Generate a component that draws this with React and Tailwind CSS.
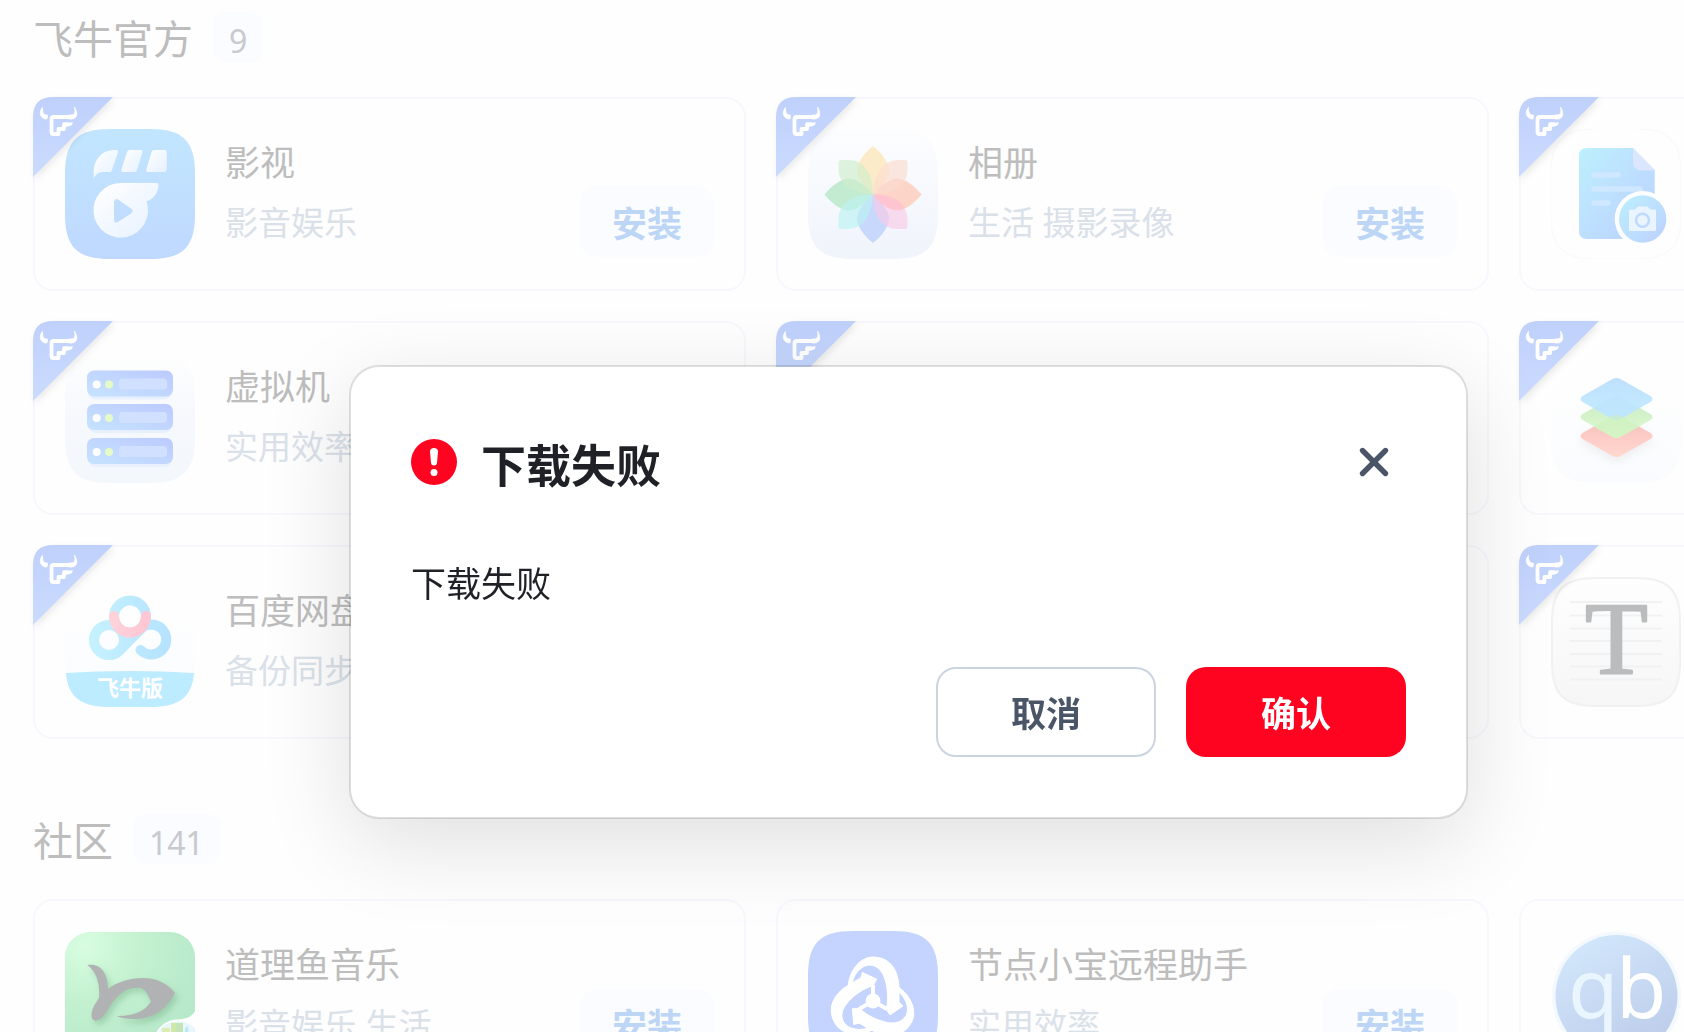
import React, { useState } from 'react';
import { X } from 'lucide-react';

const TILE = 'M0 45C0 12 12 0 45 0H85C118 0 130 12 130 45V85C130 118 118 130 85 130H45C12 130 0 118 0 85Z';

// --- App icons ---

const VideoIcon = () => (
  <svg viewBox="0 0 130 130" className="size-full">
    <defs>
      <linearGradient id="video-bg" x1="0" y1="0" x2="0" y2="1">
        <stop offset="0" stopColor="#c2e6ff" />
        <stop offset="1" stopColor="#bfd8ff" />
      </linearGradient>
      <linearGradient id="video-fg" x1="0" y1="0" x2="1" y2="1">
        <stop offset="0" stopColor="#ffffff" />
        <stop offset="1" stopColor="#e6f1ff" />
      </linearGradient>
    </defs>
    <path d={TILE} fill="url(#video-bg)" />
    <path d="M28.7 49.3V43C29 30 37 21 50 21H51.5Q53.5 21 53 23L47 41Q46.4 43 44.500 43H38C34 43 31 45 28.700 49.300Z" fill="url(#video-fg)" />
    <path d="M65 21H76Q78 21 77.500 23L72 41Q71.300 43 69.500 43H57.500Q55.700 43 56.300 41L62 23Q62.800 21 65 21Z" fill="url(#video-fg)" />
    <path d="M89 21H99.500Q101.700 21 101.700 23V41Q101.700 43 99.500 43H82.500Q80.600 43 81.200 41L86.500 23Q87.200 21 89 21Z" fill="url(#video-fg)" />
    <path
      fillRule="evenodd"
      d="M56 54H92Q93.700 54 93.500 56C93 64 89 70 81.500 72.300A27.300 27.300 0 1 1 56 54ZM49 73V91Q49.500 95 53 93L66 84.500Q69.500 82 66 79.500L53 70.500Q49.500 69 49 73Z"
      fill="url(#video-fg)"
    />
  </svg>
);

const PETAL = 'M65 65.500C54 56 49 48 49 41S56 24 65 17C74 24 81 34 81 41S76 56 65 65.500Z';
const LEAF = 'M65 65.500C42 64 30.500 54 30.500 40V33Q30.500 31 33 31H40C56 31 65 44 65 65.500Z';

const PhotosIcon = () => (
  <svg viewBox="0 0 130 130" className="size-full">
    <defs>
      <linearGradient id="photos-bg" x1="0" y1="0" x2="0" y2="1">
        <stop offset="0" stopColor="#fcfdff" />
        <stop offset="1" stopColor="#f0f4fb" />
      </linearGradient>
    </defs>
    <path d={TILE} fill="url(#photos-bg)" />
    <g opacity="0.95">
      <path d={PETAL} fill="#fdebc6" />
      <path d={PETAL} fill="#fdd3c6" transform="rotate(90 65 65.500)" />
      <path d={PETAL} fill="#c6d7fd" transform="rotate(180 65 65.500)" />
      <path d={PETAL} fill="#c0ebd0" transform="rotate(270 65 65.500)" />
    </g>
    <g opacity="0.65">
      <path d={LEAF} fill="#d0efcc" />
      <path d={LEAF} fill="#fddcd0" transform="rotate(90 65 65.500)" />
      <path d={LEAF} fill="#f9cbe6" transform="rotate(180 65 65.500)" />
      <path d={LEAF} fill="#bdf3f3" transform="rotate(270 65 65.500)" />
    </g>
    <path d="M65 65.500C80 65 92 70 97 79C86 84 74 78 65 65.500Z" fill="#ffc2cd" opacity="0.7" />
  </svg>
);

const DocumentIcon = () => (
  <svg viewBox="0 0 130 130" className="size-full">
    <defs>
      <linearGradient id="doc-fg" x1="0" y1="0" x2="1" y2="1">
        <stop offset="0" stopColor="#bdf0fd" />
        <stop offset="0.6" stopColor="#bddcff" />
        <stop offset="1" stopColor="#bdd0ff" />
      </linearGradient>
    </defs>
    <path d={TILE} fill="#fefefe" stroke="#f8f9fd" strokeWidth="1" />
    <path d="M36 19H82L103.700 41V102Q103.700 110 95.700 110H36Q28 110 28 102V27Q28 19 36 19Z" fill="url(#doc-fg)" />
    <path d="M82 19L103.700 41.500H91Q82 41.500 82 33Z" fill="#dce6ff" />
    <path d="M43 46H67M43 60H89M43 74H57" stroke="#d0e8ff" strokeWidth="5.500" strokeLinecap="round" />
    <circle cx="91.700" cy="90" r="28" fill="#fefefe" />
    <circle cx="91.700" cy="90" r="23.700" fill="url(#doc-fg)" />
    <path d="M79 80.500H84L87 77.500H96.500L99.500 80.500H104Q105 80.500 105 81.500V101Q105 102 104 102H79Q78 102 78 101V81.500Q78 80.500 79 80.500Z" fill="#eaf4ff" />
    <circle cx="91.500" cy="91.300" r="6.500" fill="none" stroke="#bddaff" strokeWidth="2.500" />
  </svg>
);

const ServerIcon = () => (
  <svg viewBox="0 0 130 130" className="size-full">
    <defs>
      <linearGradient id="server-bg" x1="0" y1="0" x2="0" y2="1">
        <stop offset="0" stopColor="#fefefe" />
        <stop offset="0.5" stopColor="#f6f8fd" />
        <stop offset="1" stopColor="#f3f8fd" />
      </linearGradient>
      <linearGradient id="server-fg" x1="0" y1="1" x2="1" y2="0">
        <stop offset="0" stopColor="#c6e3ff" />
        <stop offset="1" stopColor="#bccaff" />
      </linearGradient>
    </defs>
    <path d={TILE} fill="url(#server-bg)" />
    {[17.5, 51, 85].map((y) => (
      <g key={y}>
        <rect x="23" y={y + 6} width="84" height="23" rx="8" fill="#e8f0fd" />
        <rect x="22" y={y} width="86" height="26" rx="7" fill="url(#server-fg)" />
        <circle cx="31.700" cy={y + 14} r="4" fill="#ffffff" />
        <circle cx="44" cy={y + 14} r="4" fill="#e6fac8" />
        <rect x="54" y={y + 8} width="48" height="11" rx="4" fill="#d2e0ff" />
      </g>
    ))}
  </svg>
);

const LayersIcon = () => (
  <svg viewBox="0 0 130 130" className="size-full">
    <defs>
      <linearGradient id="layers-bg" x1="0" y1="0" x2="0" y2="1">
        <stop offset="0.3" stopColor="#fefefe" />
        <stop offset="1" stopColor="#f9fbfe" />
      </linearGradient>
      <linearGradient id="layer-blue" x1="0" y1="0" x2="0" y2="1">
        <stop offset="0" stopColor="#bfe0fd" />
        <stop offset="1" stopColor="#c4edff" />
      </linearGradient>
      <linearGradient id="layer-green" x1="0" y1="0" x2="0" y2="1">
        <stop offset="0" stopColor="#c6ebc6" />
        <stop offset="1" stopColor="#e2fad0" />
      </linearGradient>
      <linearGradient id="layer-red" x1="0" y1="0" x2="0" y2="1">
        <stop offset="0" stopColor="#eebfb8" />
        <stop offset="0.5" stopColor="#fdcbc6" />
        <stop offset="1" stopColor="#ffd8ce" />
      </linearGradient>
    </defs>
    <path d={TILE} fill="url(#layers-bg)" />
    <g transform="translate(1.500 0)">
      <g className="drop-shadow-[0_4px_5px_rgba(0,0,0,0.06)]">
        <path d="M60 63Q64 61 68 63L98 80Q102 83 98 86L68 103Q64 105 60 103L30 86Q26 83 30 80Z" fill="url(#layer-red)" />
      </g>
      <path d="M60 44Q64 42 68 44L98 61Q102 64 98 67L68 84Q64 86 60 84L30 67Q26 64 30 61Z" fill="url(#layer-green)" />
      <path d="M60 26Q64 24 68 26L98 43Q102 46 98 49L68 66Q64 68 60 66L30 49Q26 46 30 43Z" fill="url(#layer-blue)" />
      <path d="M60 44Q64 42 68 44L87 55L68 66Q64 68 60 66L41 55Z" fill="#bde2fa" opacity="0.6" />
      <path d="M60 63Q64 61 68 63L87 73.500L68 84Q64 86 60 84L41 73.500Z" fill="#cdf0bc" opacity="0.6" />
    </g>
  </svg>
);

const NetdiskIcon = () => (
  <svg viewBox="0 0 130 130" className="size-full">
    <defs>
      <linearGradient id="disk-fg" gradientUnits="userSpaceOnUse" x1="24" y1="0" x2="106" y2="0">
        <stop offset="0" stopColor="#c6f2ff" />
        <stop offset="1" stopColor="#b5e2ff" />
      </linearGradient>
      <linearGradient id="disk-bg" x1="0" y1="0" x2="0" y2="1">
        <stop offset="0.300" stopColor="#fefefe" />
        <stop offset="0.800" stopColor="#fafcff" />
      </linearGradient>
      <linearGradient id="disk-red" x1="0" y1="0" x2="1" y2="0">
        <stop offset="0" stopColor="#ffd2da" />
        <stop offset="1" stopColor="#ffc6d4" />
      </linearGradient>
    </defs>
    <path d={TILE} fill="url(#disk-bg)" />
    <g fill="none" stroke="url(#disk-fg)" strokeWidth="10" strokeLinecap="round">
      <circle cx="65" cy="39.500" r="16" />
      <circle cx="44" cy="63" r="15" />
      <path d="M54 74L77 51" />
      <path d="M75.500 73A15 15 0 1 0 78 50" />
    </g>
    <path d="M49 39A16 16.500 0 0 0 81 39" fill="none" stroke="url(#disk-red)" strokeWidth="10" strokeLinecap="round" />
    <path d="M1 96Q65 92 129 96C127 121 113 130 85 130H45C17 130 3 121 1 96Z" fill="#bdebff" />
    <text x="65" y="119" textAnchor="middle" fill="#ffffff" className="font-['Noto_Sans_CJK_SC',sans-serif] text-[22px] font-bold">飞牛版</text>
  </svg>
);

const TextIcon = () => (
  <svg viewBox="0 0 130 130" className="size-full">
    <defs>
      <linearGradient id="text-bg" x1="0" y1="0" x2="0" y2="1">
        <stop offset="0" stopColor="#fefefe" />
        <stop offset="1" stopColor="#f6f6f6" />
      </linearGradient>
    </defs>
    <path d={TILE} fill="#f1f1f1" />
    <path d={TILE} fill="url(#text-bg)" transform="translate(2 2) scale(0.970)" />
    <path d="M19 25H111M19 38.500H111M19 51.500H111M19 64H111M19 77H111M19 89.500H111M19 102.500H111" stroke="#f1f1f1" strokeWidth="2" />
    <text
      x="65.500"
      y="97"
      textAnchor="middle"
      fill="#babcbe"
      stroke="#babcbe"
      strokeWidth="2"
      strokeLinejoin="round"
      className="font-['Liberation_Serif',serif] text-[103px]"
    >
      T
    </text>
  </svg>
);

const FishIcon = () => (
  <svg viewBox="0 0 130 130" className="size-full">
    <defs>
      <radialGradient id="fish-bg" cx="0.15" cy="0.1" r="1.1">
        <stop offset="0" stopColor="#d8fde0" />
        <stop offset="0.4" stopColor="#c3f1d0" />
        <stop offset="1" stopColor="#b3e6c8" />
      </radialGradient>
      <clipPath id="fish-badge">
        <circle cx="113" cy="114" r="24" />
      </clipPath>
    </defs>
    <rect width="130" height="130" y="1" rx="25" fill="url(#fish-bg)" />
    <g className="drop-shadow-[3px_4px_3px_rgba(60,120,80,0.25)]">
      <path
        d="M22.300 34C32 32 43 38 43 58C52 51 64 47 78 47C92 47 103 53 110 62C103 75 92 87 72 88C62 88 55 87 52 85C65 85 80 82 86 70C83 66 83 60 76 57C60 55 50 66 42 80C36 90 29 92 27 87C25 80 30 73 34 67C35 55 33 42 22.300 34Z"
        fill="#b0b2b3"
      />
    </g>
    <path d="M130 80C127 86 121 88 111 88.500C98 90 89 99 88 114V130H130Z" fill="#fefefe" />
    <g clipPath="url(#fish-badge)">
      <circle cx="113" cy="114" r="24" fill="#e8f7fd" />
      <path d="M97 97H105V130H97Z" fill="#dcecb2" />
      <path d="M106 92H118V130H106Z" fill="#cfe8a8" />
      <path d="M111 92H118V130H111Z" fill="#c5e4b5" />
      <path d="M120 97L123 95L125 130H119Z" fill="#bdeaf2" />
    </g>
  </svg>
);

const RING = 'M40 56C42 36 54 26 65 26C84 26 91 42 91 58V71L95 75L82 84L77 76L79 75C81 60 78 34 61 34C52 35 45 44 44 54Z';

const RemoteIcon = () => (
  <svg viewBox="0 0 130 130" className="size-full">
    <path d={TILE} fill="#c4d4ff" />
    {['rotate(0 65 70)', 'rotate(120 65 70)', 'rotate(240 65 70)'].map((turn) => (
      <g key={turn} transform={turn} fill="#ffffff">
        <path d={RING} stroke="#ffffff" strokeWidth="1" strokeLinejoin="round" />
        <path d="M63 70V54H67V70Z" />
      </g>
    ))}
    <circle cx="65" cy="70" r="7.500" fill="#ffffff" />
  </svg>
);

const QbIcon = () => (
  <svg viewBox="0 0 130 130" className="size-full">
    <defs>
      <linearGradient id="qb-bg" x1="0.2" y1="0" x2="0.8" y2="1">
        <stop offset="0" stopColor="#d2e7fc" />
        <stop offset="1" stopColor="#bccbe9" />
      </linearGradient>
    </defs>
    <circle cx="65.500" cy="65" r="64.500" fill="#f3f9fe" />
    <circle cx="65.500" cy="65" r="61" fill="url(#qb-bg)" />
    <g className="font-['Noto_Sans',sans-serif] text-[82px]">
      <text x="17" y="87" fill="#eaf6ff">q</text>
      <text x="65" y="87" fill="#ffffff">b</text>
    </g>
  </svg>
);

const OfficialRibbon = () => (
  <svg viewBox="0 0 80 80" className="absolute -left-0.5 -top-0.5 size-20 overflow-visible" aria-hidden="true">
    <defs>
      <linearGradient id="ribbon" x1="0" y1="0" x2="0" y2="1">
        <stop offset="0" stopColor="#bfd0fb" />
        <stop offset="1" stopColor="#cbdbff" />
      </linearGradient>
    </defs>
    <path d="M0 20Q0 0 20 0H80L0 80Z" fill="url(#ribbon)" className="drop-shadow-[2px_3px_3px_rgba(0,0,0,0.08)]" />
    <path d="M9.500 10.500C5.500 15 7 22 14 22L14.500 18C11 18.500 9 15.500 9.500 10.500Z" fill="#ffffff" stroke="#ffffff" strokeWidth="0.800" />
    <path d="M41.500 10C44.500 15 45.500 22 38 22H36V18H38C42 18 42.500 15 41.500 10Z" fill="#ffffff" stroke="#ffffff" strokeWidth="0.800" />
    <path
      d="M38 20H21Q18.500 20 18.500 22.500V35Q18.500 37 20.500 37H25.500V32H31V27.500H35"
      fill="none"
      stroke="#ffffff"
      strokeWidth="3.800"
      strokeLinejoin="round"
    />
    <path d="M30 25.500H40C39 28.500 37 29.500 34 29.500H30Z" fill="#ffffff" />
  </svg>
);

// --- Data ---

const officialApps = [
  { id: 'video', name: '影视', tags: '影音娱乐', icon: VideoIcon },
  { id: 'photos', name: '相册', tags: '生活 摄影录像', icon: PhotosIcon },
  { id: 'docs', icon: DocumentIcon },
  { id: 'vm', name: '虚拟机', tags: '实用效率', icon: ServerIcon },
  { id: 'slot-5' },
  { id: 'layers', icon: LayersIcon },
  { id: 'netdisk', name: '百度网盘', tags: '备份同步', icon: NetdiskIcon },
  { id: 'slot-8' },
  { id: 'text', icon: TextIcon },
];

const communityApps = [
  { id: 'fish', name: '道理鱼音乐', tags: '影音娱乐 生活', icon: FishIcon },
  { id: 'remote', name: '节点小宝远程助手', tags: '实用效率', icon: RemoteIcon },
  { id: 'qb', icon: QbIcon },
];

const AppCard = ({ app, official }) => {
  const Icon = app.icon;
  return (
    <li className="relative flex h-[194px] gap-[30px] rounded-[20px] border-2 border-[#f7f8fd] bg-[#fefefe] p-[30px]">
      <div className="size-[130px] shrink-0">{Icon && <Icon />}</div>
      {official && <OfficialRibbon />}
      {app.name && (
        <>
          <div className="min-w-0 flex-1 whitespace-nowrap pt-1">
            <h3 className="text-[35px] leading-[60px] text-[#bdbdbd]">{app.name}</h3>
            <p className="text-[33px] leading-[60px] text-[#dae1e9]">{app.tags}</p>
          </div>
          <button
            type="button"
            className="mb-0.5 h-[70px] w-[134px] shrink-0 self-end rounded-2xl bg-[#fafcff] pt-1 text-[35px] font-bold text-[#bdd6f5]"
          >
            安装
          </button>
        </>
      )}
    </li>
  );
};

const AppSection = ({ title, count, apps, official }) => (
  <section>
    <div className="flex h-[50px] items-center gap-5">
      <h2 className="pt-1 text-[40px] leading-[50px] text-[#bdbdbd]">{title}</h2>
      <span className="h-[50px] rounded-xl bg-[#fafcff] px-4 pt-1 text-[32px] leading-[50px] text-[#c9c9d0]">{count}</span>
    </div>
    <ul className="mt-[35px] grid grid-cols-[repeat(3,minmax(713px,1fr))] gap-[30px]">
      {apps.map((app) => (
        <AppCard key={app.id} app={app} official={official} />
      ))}
    </ul>
  </section>
);

const ErrorDialog = ({ onClose }) => (
  <div className="fixed inset-0 flex items-center justify-center pl-[133px] pt-[152px]">
    <div
      role="alertdialog"
      aria-labelledby="dialog-title"
      aria-describedby="dialog-text"
      className="w-full max-w-[1119px] rounded-[30px] border-2 border-black/12 bg-white bg-clip-padding p-[60px] shadow-[0_25px_90px_rgba(0,0,0,0.12)]"
    >
      <div className="flex h-[70px] items-center">
        <svg viewBox="0 0 46 46" className="size-[46px]" aria-hidden="true">
          <circle cx="23" cy="23" r="23" fill="#ff0420" />
          <path d="M19 12.500Q19 9 23 9T27 12.500L26 24Q25.700 26.500 23 26.500T20 24Z" fill="#ffffff" />
          <circle cx="23" cy="33.500" r="3.500" fill="#ffffff" />
        </svg>
        <h1 id="dialog-title" className="ml-6 flex-1 pt-2 text-[45px] font-bold leading-[62px] text-[#1f2126]">下载失败</h1>
        <button type="button" aria-label="关闭" onClick={onClose} className="flex size-16 items-center justify-center text-[#4a5568]">
          <X size={46} strokeWidth={2.8} />
        </button>
      </div>
      <p id="dialog-text" className="mt-[60px] pt-0.5 text-[35px] leading-[50px] text-[#1f2126]">下载失败</p>
      <div className="mt-[58px] flex justify-end gap-[30px] text-[35px] font-bold">
        <button type="button" onClick={onClose} className="h-[90px] w-[220px] rounded-[20px] border-2 border-[#cbd5e1] pt-1 text-[#4a5568]">
          取消
        </button>
        <button type="button" onClick={onClose} className="h-[90px] w-[220px] rounded-[20px] bg-[#ff0420] pt-1 text-white">
          确认
        </button>
      </div>
    </div>
  </div>
);

const App = () => {
  const [open, setOpen] = useState(true);

  return (
    <div className="h-screen overflow-hidden bg-[#fefefe] font-['Noto_Sans','Noto_Sans_CJK_SC',sans-serif]">
      <main className="flex flex-col gap-[75px] px-[33px] pt-3">
        <AppSection title="飞牛官方" count={9} apps={officialApps} official />
        <AppSection title="社区" count={141} apps={communityApps} />
      </main>
      {open && <ErrorDialog onClose={() => setOpen(false)} />}
    </div>
  );
};

export default App;
